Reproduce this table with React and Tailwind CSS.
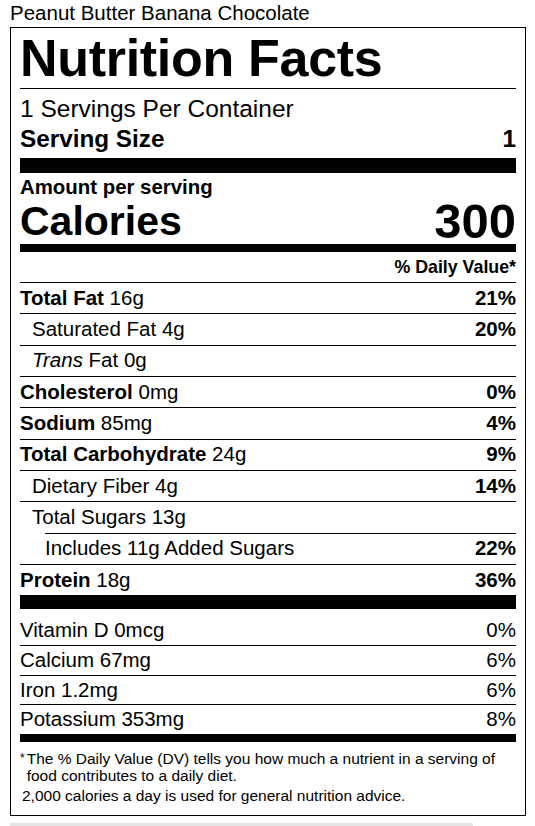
import React from "react";

const nutrients = [
  { label: "Total Fat", amount: "16g", dv: "21%", bold: true, indent: 0 },
  { label: "Saturated Fat", amount: "4g", dv: "20%", indent: 1 },
  { label: "Trans", amount: "Fat 0g", dv: "", indent: 1, italic: true },
  { label: "Cholesterol", amount: "0mg", dv: "0%", bold: true, indent: 0 },
  { label: "Sodium", amount: "85mg", dv: "4%", bold: true, indent: 0 },
  { label: "Total Carbohydrate", amount: "24g", dv: "9%", bold: true, indent: 0 },
  { label: "Dietary Fiber", amount: "4g", dv: "14%", indent: 1 },
  { label: "Total Sugars", amount: "13g", dv: "", indent: 1 },
  { label: "Includes 11g Added Sugars", amount: "", dv: "22%", indent: 2 },
  { label: "Protein", amount: "18g", dv: "36%", bold: true, indent: 0 },
];

const vitamins = [
  { label: "Vitamin D 0mcg", dv: "0%" },
  { label: "Calcium 67mg", dv: "6%" },
  { label: "Iron 1.2mg", dv: "6%" },
  { label: "Potassium 353mg", dv: "8%" },
];

const NutrientRow = ({ item }) => {
  // added sugars row gets a shorter top rule
  const ruleClass = item.indent === 2 ? "ml-[25px]" : "";
  const padClass = item.indent === 1 ? "pl-[12px]" : "";

  return (
    <div className={`border-t border-black ${ruleClass}`}>
      <div className={`flex justify-between items-center h-[30.33px] text-[20.5px] ${padClass}`}>
        <span>
          {item.italic ? (
            <>
              <span className="italic">{item.label}</span> {item.amount}
            </>
          ) : (
            <>
              {item.bold ? <span className="font-bold">{item.label}</span> : item.label}
              {item.amount ? ` ${item.amount}` : ""}
            </>
          )}
        </span>
        <span className="font-bold">{item.dv}</span>
      </div>
    </div>
  );
};

export default function App() {
  return (
    <div className="w-[535px] h-[826px] bg-white text-black overflow-hidden font-['Liberation_Sans',Arial,sans-serif]">
      <div className="pl-[10px] pt-[1px] h-[27px] text-[20.5px] leading-[24px]">
        Peanut Butter Banana Chocolate
      </div>

      <div className="ml-[10px] w-[516px] border border-black px-[9px]">
        {/* Header */}
        <h1 className="font-bold text-[52px] leading-[60px] tracking-[-0.3px] border-b border-black">
          Nutrition Facts
        </h1>
        <div className="pt-[5px] text-[24.5px] leading-[30px]">1 Servings Per Container</div>
        <div className="flex justify-between font-bold text-[24.3px] leading-[30px]">
          <span>Serving Size</span>
          <span>1</span>
        </div>
        <div className="mt-[4px] h-[15px] bg-black" />

        {/* Calories */}
        <div className="font-bold text-[20.4px] leading-[24px] pt-[2px]">Amount per serving</div>
        <div className="flex justify-between items-end font-bold leading-[44px]">
          <span className="text-[41px]">Calories</span>
          <span className="text-[49px]">300</span>
        </div>
        <div className="mt-[1px] h-[8px] bg-black" />

        {/* Daily values */}
        <div className="text-right font-bold text-[17.8px] leading-[30px]">% Daily Value*</div>
        {nutrients.map((item) => (
          <NutrientRow key={item.label} item={item} />
        ))}
        <div className="h-[14px] bg-black" />

        {/* Vitamins & minerals */}
        <div className="pt-[6px]">
          {vitamins.map((v, i) => (
            <div
              key={v.label}
              className={`flex justify-between items-center h-[29.7px] text-[20.5px] ${
                i > 0 ? "border-t border-black" : ""
              }`}
            >
              <span>{v.label}</span>
              <span>{v.dv}</span>
            </div>
          ))}
        </div>
        <div className="h-[8px] bg-black" />

        {/* Footnote */}
        <div className="pt-[8px] pb-[11px] text-[15.5px] leading-[17px]">
          <div className="flex">
            <span className="text-[12px] leading-[17px] pr-[2px]">*</span>
            <span>
              The % Daily Value (DV) tells you how much a nutrient in a serving of food
              contributes to a daily diet.
            </span>
          </div>
          <div className="pl-[2px] mt-[3px]">
            2,000 calories a day is used for general nutrition advice.
          </div>
        </div>
      </div>

      <div className="ml-[10px] mt-[7px] w-[463px] h-[6px] bg-[#e5e5e5]" />
    </div>
  );
}
